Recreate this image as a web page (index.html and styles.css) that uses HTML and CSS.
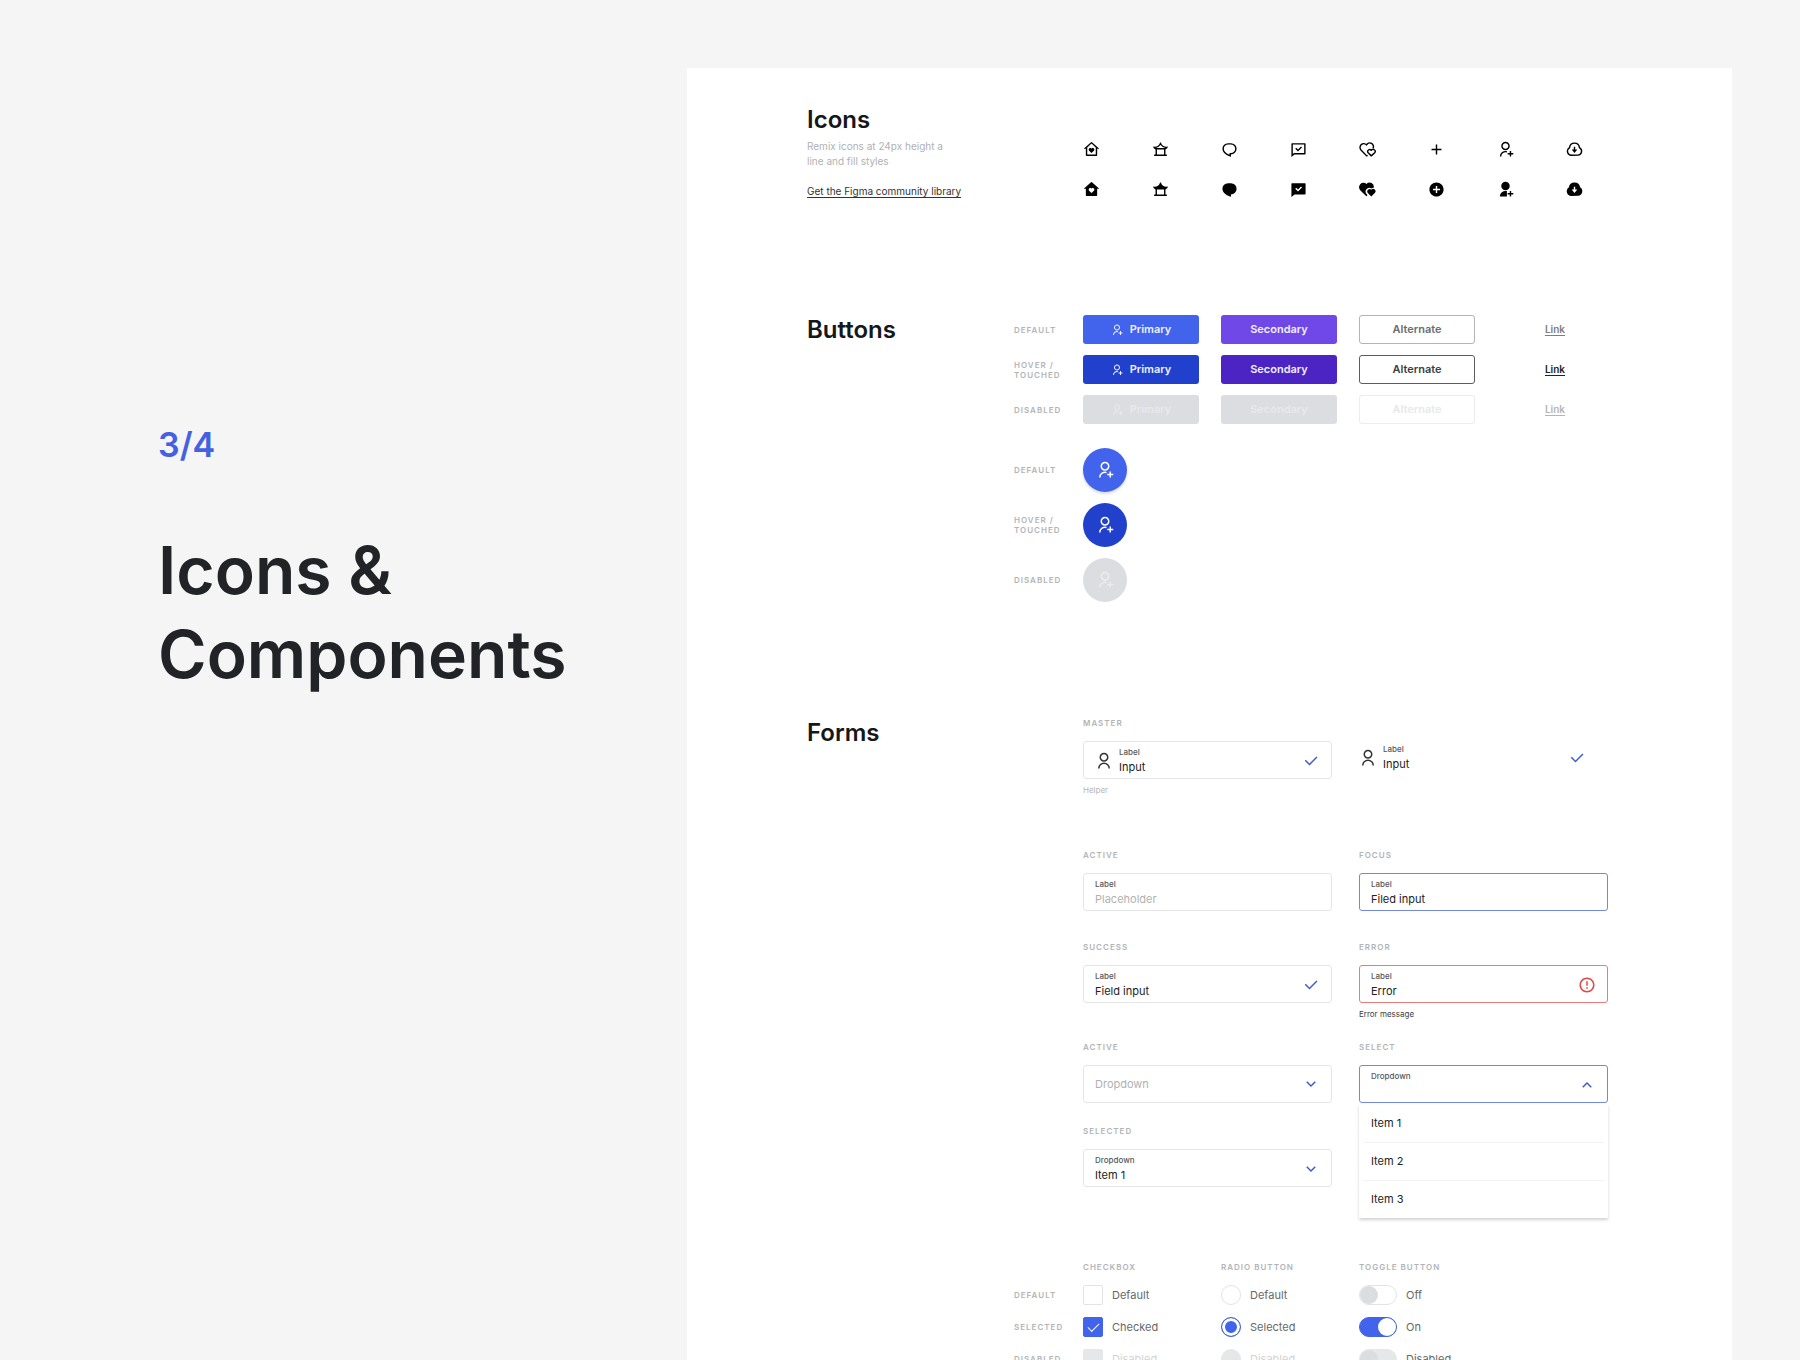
FILE: index.html
```html
<!DOCTYPE html>
<html lang="en">
<head>
    <meta charset="UTF-8">
    <meta name="viewport" content="width=device-width, initial-scale=1.0">
    <title>Icons &amp; Components</title>
    <link rel="stylesheet" href="styles.css">
</head>
<body>
    <!-- Icon sprite -->
    <svg class="sprite" aria-hidden="true">
        <symbol id="home-line" viewBox="0 0 24 24"><path d="M20 20a1 1 0 0 1-1 1H5a1 1 0 0 1-1-1v-9H1l10.327-9.388a1 1 0 0 1 1.346 0L23 11h-3v9zm-2-1V9.157l-6-5.454-6 5.454V19h12zm-6-2l-3.359-3.359a2.25 2.25 0 1 1 3.182-3.182l.177.177.177-.177a2.25 2.25 0 1 1 3.182 3.182L12 17z"/></symbol>
        <symbol id="home-fill" viewBox="0 0 24 24"><path fill-rule="evenodd" d="M20 20a1 1 0 0 1-1 1H5a1 1 0 0 1-1-1v-9H1l10.327-9.388a1 1 0 0 1 1.346 0L23 11h-3v9zm-8-3l3.359-3.359a2.25 2.25 0 1 0-3.182-3.182l-.177.177-.177-.177a2.25 2.25 0 1 0-3.182 3.182L12 17z"/></symbol>
        <symbol id="pavilion-line" viewBox="0 0 24 24"><path fill-rule="evenodd" d="M12.513 2.001a9.004 9.004 0 0 0 9.97 5.877A4.501 4.501 0 0 1 19 11.888V19l2 .001v2H3v-2h2v-7.113a4.503 4.503 0 0 1-3.484-4.01 9.004 9.004 0 0 0 9.972-5.876h1.025zM17 12H7v7h10v-7zm-5-6.673l-.11.155A11.012 11.012 0 0 1 5.4 9.736l-.358.073.673.19h12.573l.668-.19-.011-.002a11.01 11.01 0 0 1-6.836-4.326L12 5.326z"/></symbol>
        <symbol id="pavilion-fill" viewBox="0 0 24 24"><path fill-rule="evenodd" d="M12.513 2.001a9.004 9.004 0 0 0 9.97 5.877A4.501 4.501 0 0 1 19 11.888V19l2 .001v2H3v-2h2v-7.113a4.503 4.503 0 0 1-3.484-4.01 9.004 9.004 0 0 0 9.972-5.876h1.025zM17 12H7v7h10v-7z"/></symbol>
        <symbol id="chat-line" viewBox="0 0 24 24"><path fill-rule="evenodd" d="M10 3h4a8 8 0 1 1 0 16v3.5c-5-2-12-5-12-11.5a8 8 0 0 1 8-8zm2 14h2a6 6 0 1 0 0-12h-4a6 6 0 0 0-6 6c0 3.61 2.462 5.966 8 8.48V17z"/></symbol>
        <symbol id="chat-fill" viewBox="0 0 24 24"><path d="M10 3h4a8 8 0 1 1 0 16v3.5c-5-2-12-5-12-11.5a8 8 0 0 1 8-8z"/></symbol>
        <symbol id="chat-check-line" viewBox="0 0 24 24"><path fill-rule="evenodd" d="M6.455 19L2 22.5V4a1 1 0 0 1 1-1h18a1 1 0 0 1 1 1v14a1 1 0 0 1-1 1H6.455zm-.692-2H20V5H4v13.385L5.763 17zm5.53-4.879l4.243-4.242 1.414 1.414-5.657 5.657-3.89-3.89 1.415-1.414 2.475 2.475z"/></symbol>
        <symbol id="chat-check-fill" viewBox="0 0 24 24"><path fill-rule="evenodd" d="M6.455 19L2 22.5V4a1 1 0 0 1 1-1h18a1 1 0 0 1 1 1v14a1 1 0 0 1-1 1H6.455zm4.838-6.879L8.818 9.646l-1.414 1.415 3.889 3.889 5.657-5.657-1.414-1.414-4.243 4.242z"/></symbol>
        <symbol id="hearts-line" viewBox="0 0 24 24"><path fill="none" stroke="currentColor" stroke-width="2" stroke-linejoin="round" d="M12.2 20.2L10.8 21 2.8 12.6a4.9 4.9 0 0 1 7.8-7.1 4.9 4.9 0 0 1 9.2 4.8M17.3 21l-4.3-4.3a2.8 2.8 0 0 1 4.3-3.7 2.8 2.8 0 0 1 4.9 3.6z"/></symbol>
        <symbol id="hearts-fill" viewBox="0 0 24 24"><path d="M10.6 4.2a5.9 5.9 0 0 1 10.1 5.4 5.2 5.2 0 0 0-3.4.9 5.2 5.2 0 0 0-6.3 8.2l1 1.3-1.6 1.5L2 13.3a5.9 5.9 0 0 1 8.6-9.1z"/><path d="M17.3 22l-4.9-4.9a3.5 3.5 0 0 1 4.9-4.9 3.5 3.5 0 0 1 5 4.9z"/></symbol>
        <symbol id="add-line" viewBox="0 0 24 24"><path d="M11 11V5h2v6h6v2h-6v6h-2v-6H5v-2z"/></symbol>
        <symbol id="add-fill" viewBox="0 0 24 24"><path fill-rule="evenodd" d="M12 22C6.477 22 2 17.523 2 12S6.477 2 12 2s10 4.477 10 10-4.477 10-10 10zm-1-11H7v2h4v4h2v-4h4v-2h-4V7h-2v4z"/></symbol>
        <symbol id="user-add-line" viewBox="0 0 24 24"><path d="M14 14.252v2.09A6 6 0 0 0 6 22l-2-.001a8 8 0 0 1 10-7.748zM12 13c-3.315 0-6-2.685-6-6s2.685-6 6-6 6 2.685 6 6-2.685 6-6 6zm0-2c2.21 0 4-1.79 4-4s-1.79-4-4-4-4 1.79-4 4 1.79 4 4 4zm6 6v-3h2v3h3v2h-3v3h-2v-3h-3v-2h3z"/></symbol>
        <symbol id="user-add-fill" viewBox="0 0 24 24"><path d="M14 14.252V22H4a8 8 0 0 1 10-7.748zM12 13c-3.315 0-6-2.685-6-6s2.685-6 6-6 6 2.685 6 6-2.685 6-6 6zm6 4v-3h2v3h3v2h-3v3h-2v-3h-3v-2h3z"/></symbol>
        <symbol id="cloud-line" viewBox="0 0 24 24"><path fill-rule="evenodd" d="M1 14.5a6.496 6.496 0 0 1 3.064-5.519 8.001 8.001 0 0 1 15.872 0 6.5 6.5 0 0 1-2.936 12L7 21c-3.356-.274-6-3.078-6-6.5zm15.848 4.487a4.5 4.5 0 0 0 2.03-8.309l-.807-.503-.12-.942a6.001 6.001 0 0 0-11.903 0l-.12.942-.805.503a4.5 4.5 0 0 0 2.029 8.309l.173.013h9.35l.173-.013zM13 12h3l-4 5-4-5h3V8h2v4z"/></symbol>
        <symbol id="cloud-fill" viewBox="0 0 24 24"><path fill-rule="evenodd" d="M1 14.5a6.496 6.496 0 0 1 3.064-5.519 8.001 8.001 0 0 1 15.872 0 6.5 6.5 0 0 1-2.936 12L7 21c-3.356-.274-6-3.078-6-6.5zM13 12V8h-2v4H8l4 5 4-5h-3z"/></symbol>
        <symbol id="user-line" viewBox="0 0 24 24"><path fill-rule="evenodd" d="M4 22a8 8 0 1 1 16 0h-2a6 6 0 1 0-12 0H4zm8-9c-3.315 0-6-2.685-6-6s2.685-6 6-6 6 2.685 6 6-2.685 6-6 6zm0-2c2.21 0 4-1.79 4-4s-1.79-4-4-4-4 1.79-4 4 1.79 4 4 4z"/></symbol>
        <symbol id="check" viewBox="0 0 24 24"><path d="M10 15.172l9.192-9.193 1.415 1.414L10 18l-6.364-6.364 1.414-1.414z"/></symbol>
        <symbol id="arrow-down" viewBox="0 0 24 24"><path d="M12 13.172l4.95-4.95 1.414 1.414L12 16 5.636 9.636 7.05 8.222z"/></symbol>
        <symbol id="arrow-up" viewBox="0 0 24 24"><path d="M12 10.828l-4.95 4.95-1.414-1.414L12 8l6.364 6.364-1.414 1.414z"/></symbol>
        <symbol id="warning" viewBox="0 0 24 24"><path fill-rule="evenodd" d="M12 22C6.477 22 2 17.523 2 12S6.477 2 12 2s10 4.477 10 10-4.477 10-10 10zm0-2a8 8 0 1 0 0-16 8 8 0 0 0 0 16zm-1-5h2v2h-2v-2zm0-8h2v6h-2V7z"/></symbol>
    </svg>

    <div class="page">
        <header class="intro">
            <p class="step">3/4</p>
            <h1>Icons &amp; Components</h1>
        </header>

        <main class="panel">
            <!-- Icons -->
            <section class="section">
                <div class="section-head">
                    <h2>Icons</h2>
                    <p class="note">Remix icons at 24px height a line and fill styles</p>
                    <a href="#" class="library">Get the Figma community library</a>
                </div>
                <div class="icon-grid">
                    <svg class="icon"><use href="#home-line"/></svg>
                    <svg class="icon"><use href="#pavilion-line"/></svg>
                    <svg class="icon"><use href="#chat-line"/></svg>
                    <svg class="icon"><use href="#chat-check-line"/></svg>
                    <svg class="icon"><use href="#hearts-line"/></svg>
                    <svg class="icon"><use href="#add-line"/></svg>
                    <svg class="icon"><use href="#user-add-line"/></svg>
                    <svg class="icon"><use href="#cloud-line"/></svg>
                    <svg class="icon"><use href="#home-fill"/></svg>
                    <svg class="icon"><use href="#pavilion-fill"/></svg>
                    <svg class="icon"><use href="#chat-fill"/></svg>
                    <svg class="icon"><use href="#chat-check-fill"/></svg>
                    <svg class="icon"><use href="#hearts-fill"/></svg>
                    <svg class="icon"><use href="#add-fill"/></svg>
                    <svg class="icon"><use href="#user-add-fill"/></svg>
                    <svg class="icon"><use href="#cloud-fill"/></svg>
                </div>
            </section>

            <!-- Buttons -->
            <section class="section">
                <div class="section-head">
                    <h2>Buttons</h2>
                </div>
                <div>
                    <div class="button-rows">
                        <div class="row">
                            <span class="caption">Default</span>
                            <button type="button" class="btn primary"><svg class="icon-small"><use href="#user-add-line"/></svg>Primary</button>
                            <button type="button" class="btn secondary">Secondary</button>
                            <button type="button" class="btn alternate">Alternate</button>
                            <a href="#" class="link">Link</a>
                        </div>
                        <div class="row">
                            <span class="caption">Hover / Touched</span>
                            <button type="button" class="btn primary hover"><svg class="icon-small"><use href="#user-add-line"/></svg>Primary</button>
                            <button type="button" class="btn secondary hover">Secondary</button>
                            <button type="button" class="btn alternate hover">Alternate</button>
                            <a href="#" class="link hover">Link</a>
                        </div>
                        <div class="row">
                            <span class="caption">Disabled</span>
                            <button type="button" class="btn primary" disabled><svg class="icon-small"><use href="#user-add-line"/></svg>Primary</button>
                            <button type="button" class="btn secondary" disabled>Secondary</button>
                            <button type="button" class="btn alternate" disabled>Alternate</button>
                            <a href="#" class="link disabled">Link</a>
                        </div>
                    </div>
                    <div class="button-rows">
                        <div class="row">
                            <span class="caption">Default</span>
                            <button type="button" class="round primary" aria-label="Add user"><svg class="icon-medium"><use href="#user-add-line"/></svg></button>
                        </div>
                        <div class="row">
                            <span class="caption">Hover / Touched</span>
                            <button type="button" class="round primary hover" aria-label="Add user"><svg class="icon-medium"><use href="#user-add-line"/></svg></button>
                        </div>
                        <div class="row">
                            <span class="caption">Disabled</span>
                            <button type="button" class="round primary" aria-label="Add user" disabled><svg class="icon-medium"><use href="#user-add-line"/></svg></button>
                        </div>
                    </div>
                </div>
            </section>

            <!-- Forms -->
            <section class="section">
                <div class="section-head">
                    <h2>Forms</h2>
                </div>
                <div>
                    <div class="field-row space-large">
                        <div class="group">
                            <span class="caption">Master</span>
                            <div class="field">
                                <svg class="icon-medium user"><use href="#user-line"/></svg>
                                <div class="control">
                                    <label for="master">Label</label>
                                    <input type="text" id="master" value="Input">
                                </div>
                                <svg class="icon-medium blue"><use href="#check"/></svg>
                            </div>
                            <p class="helper">Helper</p>
                        </div>
                        <div class="group">
                            <span class="caption"></span>
                            <div class="field plain">
                                <svg class="icon-medium user"><use href="#user-line"/></svg>
                                <div class="control">
                                    <label for="master-plain">Label</label>
                                    <input type="text" id="master-plain" value="Input">
                                </div>
                                <svg class="icon-medium blue"><use href="#check"/></svg>
                            </div>
                        </div>
                    </div>

                    <div class="field-row space-medium">
                        <div class="group">
                            <span class="caption">Active</span>
                            <div class="field">
                                <div class="control">
                                    <label for="active">Label</label>
                                    <input type="text" id="active" placeholder="Placeholder">
                                </div>
                            </div>
                        </div>
                        <div class="group">
                            <span class="caption">Focus</span>
                            <div class="field focus">
                                <div class="control">
                                    <label for="focus">Label</label>
                                    <input type="text" id="focus" value="Filed input">
                                </div>
                            </div>
                        </div>
                    </div>

                    <div class="field-row space-small">
                        <div class="group">
                            <span class="caption">Success</span>
                            <div class="field">
                                <div class="control">
                                    <label for="success">Label</label>
                                    <input type="text" id="success" value="Field input">
                                </div>
                                <svg class="icon-medium blue"><use href="#check"/></svg>
                            </div>
                        </div>
                        <div class="group">
                            <span class="caption">Error</span>
                            <div class="field error">
                                <div class="control">
                                    <label for="error">Label</label>
                                    <input type="text" id="error" value="Error">
                                </div>
                                <svg class="icon-medium red"><use href="#warning"/></svg>
                            </div>
                            <p class="helper dark">Error message</p>
                        </div>
                    </div>

                    <div class="field-row">
                        <div class="group">
                            <span class="caption">Active</span>
                            <div class="field single">
                                <div class="control">
                                    <select class="empty" aria-label="Dropdown">
                                        <option>Dropdown</option>
                                    </select>
                                </div>
                                <svg class="icon-medium blue"><use href="#arrow-down"/></svg>
                            </div>
                        </div>
                        <div class="group">
                            <span class="caption">Select</span>
                            <div class="field focus">
                                <div class="control">
                                    <label for="dropdown-open">Dropdown</label>
                                    <select id="dropdown-open">
                                        <option></option>
                                    </select>
                                </div>
                                <svg class="icon-medium blue"><use href="#arrow-up"/></svg>
                                <ul class="menu">
                                    <li>Item 1</li>
                                    <li>Item 2</li>
                                    <li>Item 3</li>
                                </ul>
                            </div>
                        </div>
                    </div>

                    <div class="field-row space-last">
                        <div class="group">
                            <span class="caption">Selected</span>
                            <div class="field">
                                <div class="control">
                                    <label for="dropdown-selected">Dropdown</label>
                                    <select id="dropdown-selected">
                                        <option>Item 1</option>
                                    </select>
                                </div>
                                <svg class="icon-medium blue"><use href="#arrow-down"/></svg>
                            </div>
                        </div>
                    </div>

                    <div class="row choice-head">
                        <span></span>
                        <span class="caption">Checkbox</span>
                        <span class="caption">Radio button</span>
                        <span class="caption">Toggle button</span>
                    </div>
                    <div class="choice-rows">
                        <div class="row">
                            <span class="caption">Default</span>
                            <label class="choice"><input type="checkbox">Default</label>
                            <label class="choice"><input type="radio" name="radio">Default</label>
                            <label class="choice"><input type="checkbox" class="toggle">Off</label>
                        </div>
                        <div class="row">
                            <span class="caption">Selected</span>
                            <label class="choice"><input type="checkbox" checked>Checked</label>
                            <label class="choice"><input type="radio" name="radio" checked>Selected</label>
                            <label class="choice"><input type="checkbox" class="toggle" checked>On</label>
                        </div>
                        <div class="row">
                            <span class="caption">Disabled</span>
                            <label class="choice faded"><input type="checkbox" disabled>Disabled</label>
                            <label class="choice faded"><input type="radio" name="radio" disabled>Disabled</label>
                            <label class="choice"><input type="checkbox" class="toggle" disabled>Disabled</label>
                        </div>
                    </div>
                </div>
            </section>
        </main>
    </div>
</body>
</html>
```

FILE: styles.css
```css
*, *::after {
    box-sizing: border-box;
}

body {
    margin: 0;
    font-family: Inter, "Liberation Sans", sans-serif;
    font-size: 11px;
    line-height: 15px;
    color: #212326;
    background-color: #f5f5f5;
}

h1, h2, p, ul {
    margin: 0;
    padding: 0;
}

button, input, select {
    font: inherit;
    color: inherit;
}

.sprite {
    position: absolute;
    width: 0;
    height: 0;
}

svg {
    fill: currentColor;
    flex: none;
}

.page {
    display: flex;
    height: 100vh;
    overflow: hidden;
    padding: 68px 68px 0 158px;
}

/* Left side */
.intro {
    flex: 0 0 529px;
    padding-top: 357px;
}

.step {
    font-size: 34px;
    line-height: 40px;
    font-weight: 600;
    color: #4361e0;
}

h1 {
    margin-top: 63px;
    max-width: 440px;
    font-size: 66px;
    line-height: 84px;
    font-weight: 600;
}

/* White panel */
.panel {
    flex: 1;
    height: max-content;
    padding: 37px 119px 60px 120px;
    background-color: #fff;
}

.section {
    display: grid;
    grid-template-columns: 207px 1fr;
    margin-bottom: 116px;
}

h2 {
    font-size: 24px;
    line-height: 30px;
    font-weight: 600;
    color: #161718;
}

.note {
    max-width: 150px;
    margin-top: 4px;
    font-size: 10px;
    color: #b0b1b3;
}

.library {
    display: inline-block;
    margin-top: 15px;
    font-size: 10px;
    color: #333;
    white-space: nowrap;
    text-underline-offset: 2px;
}

.caption {
    font-size: 8px;
    line-height: 10px;
    font-weight: 600;
    letter-spacing: 1px;
    text-transform: uppercase;
    color: #b2b4b7;
}

/* Icons */
.icon-grid {
    display: grid;
    grid-template-columns: repeat(8, 1fr);
    align-content: start;
    gap: 23px 22px;
    padding: 36px 0 0 69px;
    color: #000;
}

.icon {
    width: 17px;
    height: 17px;
}

.icon-small {
    width: 12px;
    height: 12px;
}

.icon-medium {
    width: 18px;
    height: 18px;
}

/* Buttons */
.row {
    display: grid;
    grid-template-columns: 47px repeat(4, 1fr);
    column-gap: 22px;
    align-items: center;
}

.button-rows {
    display: grid;
    row-gap: 11px;
}

.button-rows + .button-rows {
    margin-top: 24px;
}

.btn {
    display: flex;
    align-items: center;
    justify-content: center;
    gap: 7px;
    height: 29px;
    padding: 0;
    border: 1px solid transparent;
    border-radius: 3px;
    font-weight: 600;
    color: #f0f0ff;
}

.primary {
    background-color: #4263eb;
}

.primary.hover {
    background-color: #2141cc;
}

.secondary {
    background-color: #7048e8;
}

.secondary.hover {
    background-color: #4c24c4;
}

.alternate {
    border-color: #b2b4b6;
    background-color: #fff;
    color: #6b6d70;
}

.alternate.hover {
    border-color: #5a5c5e;
    color: #3c3e40;
}

.btn:disabled {
    background-color: #dcdde0;
    color: #e8e9eb;
}

.alternate:disabled {
    border-color: #ebecec;
    background-color: #fff;
}

.link {
    justify-self: center;
    font-size: 10px;
    font-weight: 600;
    color: #7c7e80;
    text-underline-offset: 2px;
}

.link.hover {
    color: #222;
}

.link.disabled {
    color: #b4b5b7;
}

.round {
    display: flex;
    align-items: center;
    justify-content: center;
    width: 44px;
    height: 44px;
    padding: 0;
    border: 0;
    border-radius: 50%;
    color: #fff;
    box-shadow: 0 2px 3px rgba(0, 0, 0, 0.15);
}

.round.hover {
    box-shadow: none;
}

.round:disabled {
    background-color: #dcdde0;
    color: #ebecee;
    box-shadow: none;
}

/* Fields */
.field-row {
    display: grid;
    grid-template-columns: 1fr 1fr;
    column-gap: 22px;
    padding-left: 69px;
    margin-bottom: 23px;
}

.space-large {
    margin-bottom: 54px;
}

.space-medium {
    margin-bottom: 31px;
}

.space-small {
    margin-bottom: 22px;
}

.space-last {
    margin-bottom: 75px;
}

.group {
    padding-right: 5px;
}

.group .caption {
    display: block;
    height: 10px;
    margin-bottom: 13px;
}

.field {
    position: relative;
    display: flex;
    align-items: center;
    padding: 4px 11px 2px;
    border: 1px solid #e4e6e7;
    border-radius: 3px;
}

.plain {
    padding: 2px 22px 2px 0;
    border: 0;
}

.single {
    padding: 9px 11px;
}

.focus {
    border-color: #7488e0;
}

.error {
    border-color: #ed7a7a;
}

.control {
    flex: 1;
    min-width: 0;
}

.user {
    margin-right: 6px;
    color: #333;
}

.blue {
    color: #4059d0;
}

.red {
    color: #e04848;
}

.control label {
    display: block;
    font-size: 8px;
    line-height: 12px;
    font-weight: 500;
    color: #55575a;
}

.control input, .control select {
    display: block;
    width: 100%;
    height: 18px;
    padding: 0;
    border: 0;
    outline: none;
    appearance: none;
    background: none;
}

.control input::placeholder, .control .empty {
    color: #b0b1b3;
}

.helper {
    margin-top: 5px;
    font-size: 8px;
    line-height: 12px;
    color: #b5b7b9;
}

.helper.dark {
    color: #3c3e40;
}

.menu {
    position: absolute;
    top: 38px;
    left: -1px;
    right: -1px;
    z-index: 1;
    padding: 0 4px;
    list-style: none;
    background-color: #fff;
    box-shadow: 0 2px 3px rgba(0, 0, 0, 0.18);
}

.menu li {
    padding: 11px 8px;
    border-bottom: 1px solid #f1f2f2;
    line-height: 16px;
}

.menu li + li {
    padding-top: 10px;
}

.menu li:last-child {
    border-bottom: 0;
}

/* Checkbox, radio and toggle */
.choice-head {
    margin-bottom: 13px;
}

.choice-rows {
    display: grid;
    row-gap: 12px;
}

.choice {
    display: flex;
    align-items: center;
    gap: 9px;
    color: #66686a;
}

.choice.faded {
    color: #d2d3d4;
}

.choice input {
    position: relative;
    flex: none;
    width: 20px;
    height: 20px;
    margin: 0;
    border: 1px solid #e2e3e4;
    border-radius: 2px;
    appearance: none;
    background-color: #fff;
}

.choice input:checked {
    border-color: #4263eb;
    background-color: #4263eb;
}

.choice input:disabled {
    border-color: #e6e7e8;
    background-color: #e6e7e8;
}

/* tick */
.choice input[type="checkbox"]:checked::after {
    content: "";
    position: absolute;
    top: 5px;
    left: 4px;
    width: 11px;
    height: 6px;
    border: solid #fff;
    border-width: 0 0 1px 1px;
    transform: rotate(-45deg);
}

.choice input[type="radio"] {
    border-radius: 50%;
}

.choice input[type="radio"]:checked {
    box-shadow: inset 0 0 0 3px #fff;
}

.choice input.toggle {
    width: 38px;
    border-radius: 10px;
}

.choice input.toggle::after,
.choice input.toggle:checked::after {
    content: "";
    position: absolute;
    top: 0;
    left: 0;
    width: 18px;
    height: 18px;
    border: 0;
    border-radius: 50%;
    transform: none;
    background-color: #dcdde0;
}

.choice input.toggle:checked::after {
    left: 18px;
    background-color: #fff;
}
```
